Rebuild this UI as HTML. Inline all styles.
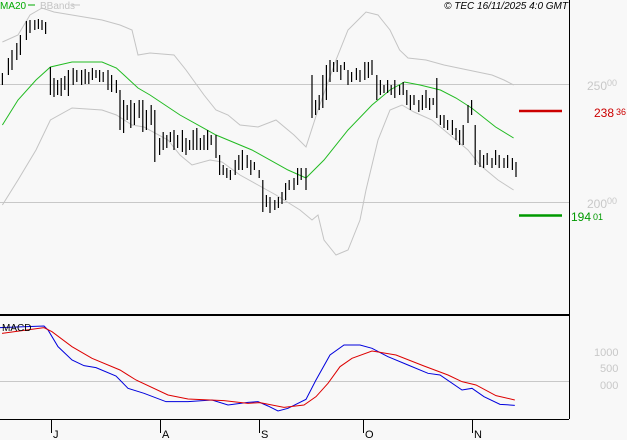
<!DOCTYPE html>
<html><head><meta charset="utf-8"><style>
html,body{margin:0;padding:0;background:#f8f8f8;width:627px;height:440px;overflow:hidden;font-family:"Liberation Sans",sans-serif}
svg{display:block}
</style></head><body>
<svg width="627" height="440" xmlns="http://www.w3.org/2000/svg">
<rect width="627" height="440" fill="#f8f8f8"/>
<line x1="0" y1="84.5" x2="569" y2="84.5" stroke="#c8c8c8"/>
<line x1="0" y1="202.5" x2="569" y2="202.5" stroke="#c8c8c8"/>
<line x1="0" y1="381.5" x2="569" y2="381.5" stroke="#c8c8c8"/>
<g transform="scale(1.2,1)" fill="none">
<polyline vector-effect="non-scaling-stroke" stroke="#c4c4c4" stroke-width="1" points="2,42 15,35 25,15 35,8 45,12 60,15 85,20 100,25 110,30 115,55 125,53 145,55 155,70 170,95 180,110 190,115 200,125 215,127 230,120 245,135 255,147 265,110 280,60 290,30 305,12 315,15 325,30 333,50 340,58 355,60 370,65 390,70 410,75 420,80 428,85"/>
<polyline vector-effect="non-scaling-stroke" stroke="#c4c4c4" stroke-width="1" points="2,205 15,180 30,150 42,120 60,108 85,110 97,115 110,125 120,127 140,140 150,155 160,165 175,160 185,162 200,175 215,185 230,195 250,210 260,220 265,215 270,240 280,255 290,250 300,220 305,190 315,140 325,110 335,105 345,112 360,120 375,135 390,150 400,165 415,180 428,190"/>
<polyline vector-effect="non-scaling-stroke" stroke="#22bb22" stroke-width="1" points="2,125 15,100 30,80 42,67 60,62 85,62 97,68 115,88 125,95 150,115 180,135 210,150 240,170 255,178 270,160 290,130 310,105 325,90 337,82 350,85 367,90 380,98 393,108 413,127 428,138"/>
<path vector-effect="non-scaling-stroke" stroke="#000" stroke-width="1.2" d="M2,73V85M7,58V75M10,50V70M14,43V60M17,35V55M22,21V40M25,20V33M29,20V30M32,19V29M35,20V30M38,22V34M42,67V95M45,78V97M48,80V95M51,78V96M54,76V90M57,70V96M61,68V85M64,70V82M68,70V85M71,69V84M74,72V84M77,68V80M80,70V78M83,70V82M86,72V82M90,70V90M93,75V92M97,80V93M100,90V130M103,100V133M106,105V120M109,100V128M112,103V125M116,100V118M119,100V132M122,110V130M126,105V125M129,110V162M133,138V155M136,132V150M139,135V148M142,132V142M145,130V150M148,135V148M152,130V152M155,138V155M158,140V150M161,130V150M164,128V150M167,138V150M170,135V150M173,130V150M176,135V145M180,135V158M183,155V175M186,165V175M189,168V178M192,170V180M196,160V175M199,155V170M202,150V170M206,155V168M209,160V175M212,162V170M216,170V178M219,180V212M222,195V207M225,197V213M229,200V210M232,197V208M235,192V204M238,183V200M241,180V190M245,178V190M248,168V185M251,168V180M255,168V190M260,75V118M263,100V115M266,95V110M269,75V108M272,65V100M275,60V82M278,62V72M281,60V72M284,65V80M287,62V70M290,70V85M293,72V82M297,68V80M300,70V82M304,62V80M307,62V78M310,60V75M314,75V100M317,80V95M320,85V93M323,80V93M326,85V95M329,80V98M333,85V95M336,82V95M339,90V105M342,95V110M345,95V105M349,100V112M352,95V110M355,90V108M358,98V110M361,98V105M364,78V118M367,115V125M370,115V128M373,120V130M377,120V135M380,128V140M383,130V145M386,125V145M390,105V123M393,100V115M396,125V165M400,150V167M403,155V168M406,153V165M410,158V168M413,150V165M416,155V168M420,158V168M423,155V168M427,158V170M430,162V177"/>
</g>
<line x1="519" y1="111" x2="562" y2="111" stroke="#cc0000" stroke-width="2.5"/>
<line x1="519" y1="215.5" x2="562" y2="215.5" stroke="#009900" stroke-width="2.5"/>
<line x1="569.5" y1="0" x2="569.5" y2="419" stroke="#000"/>
<line x1="0" y1="315" x2="569" y2="315" stroke="#000" stroke-width="2"/>
<line x1="0" y1="419.5" x2="569" y2="419.5" stroke="#000"/>
<g stroke="#000"><line x1="51.5" y1="419" x2="51.5" y2="433"/><line x1="160.5" y1="419" x2="160.5" y2="433"/><line x1="259.5" y1="419" x2="259.5" y2="433"/><line x1="363.5" y1="419" x2="363.5" y2="433"/><line x1="472.5" y1="419" x2="472.5" y2="433"/></g>
<g font-size="11" fill="#000"><text x="53" y="438">J</text><text x="162" y="438">A</text><text x="261" y="438">S</text><text x="365" y="438">O</text><text x="474" y="438">N</text></g>
<g transform="translate(0,300) scale(0.4,0.3333)" fill="none">
<polyline vector-effect="non-scaling-stroke" stroke="#0000dd" stroke-width="1" points="0,83 110,78 120,90 145,140 180,180 210,197 240,203 290,228 320,265 360,280 415,305 470,305 530,300 570,315 620,307 645,305 670,318 695,333 720,325 765,298 790,240 825,165 860,135 900,135 930,145 970,170 1020,195 1070,220 1100,225 1155,270 1180,265 1210,290 1250,313 1287,316"/>
<polyline vector-effect="non-scaling-stroke" stroke="#dd0000" stroke-width="1" points="5,100 110,83 130,95 180,140 230,175 300,210 340,240 420,285 470,297 560,302 620,310 650,308 710,322 760,315 790,290 820,250 850,200 880,175 930,153 990,165 1060,198 1120,225 1155,245 1190,255 1240,287 1287,300"/>
</g>
<text x="2" y="331" font-size="10" fill="#000">MACD</text>
<text x="0" y="9" font-size="10" fill="#00aa00">MA20</text>
<line x1="28" y1="5" x2="35" y2="5" stroke="#00aa00"/>
<text x="40" y="9" font-size="10" fill="#c4c4c4">BBands</text>
<line x1="72" y1="5" x2="80" y2="5" stroke="#c4c4c4"/>
<text x="568" y="9" font-size="10" font-style="italic" fill="#000" text-anchor="end">© TEC 16/11/2025 4:0 GMT</text>
<g fill="#c8c8c8" font-size="12"><text x="587" y="90">250<tspan font-size="9" dy="-4">00</tspan></text><text x="587" y="208">200<tspan font-size="9" dy="-4">00</tspan></text></g>
<text x="594" y="117" font-size="12" fill="#cc0000">238<tspan font-size="9" dx="2" dy="-2">36</tspan></text>
<text x="571" y="221" font-size="12" fill="#009900">194<tspan font-size="9" dx="2" dy="-1">01</tspan></text>
<g fill="#c8c8c8" font-size="11"><text x="594" y="356">1000</text><text x="600" y="372">500</text><text x="600" y="389">000</text></g>
</svg>
</body></html>
